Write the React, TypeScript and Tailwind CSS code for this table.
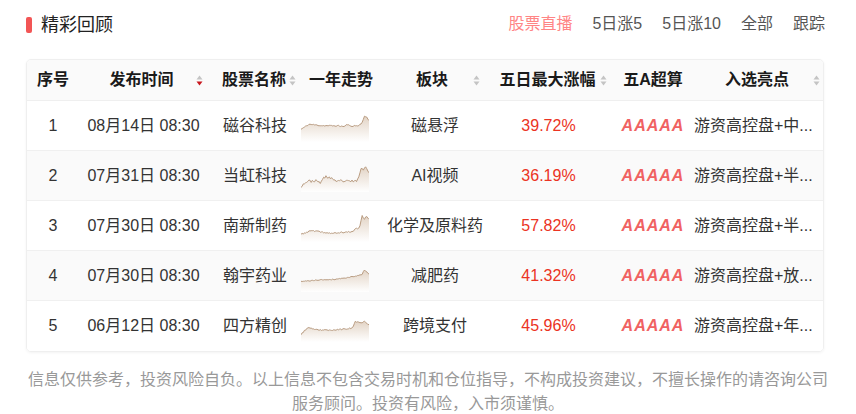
import React from 'react';

type Row = {
    no: number;
    time: string;
    name: string;
    sector: string;
    pct: string;
    note: string;
    keys: [number, number][];
    seed: number;
    noise: number;
};

const rows: Row[] = [
    {
        no: 1, time: '08月14日 08:30', name: '磁谷科技', sector: '磁悬浮', pct: '39.72%', note: '游资高控盘+中...', seed: 11, noise: 0.05,
        keys: [[0, 0.4], [0.12, 0.62], [0.3, 0.56], [0.55, 0.55], [0.64, 0.52], [0.68, 0.62], [0.72, 0.54], [0.85, 0.56], [0.9, 0.7], [0.93, 0.98], [0.97, 0.9], [1, 0.78]],
    },
    {
        no: 2, time: '07月31日 08:30', name: '当虹科技', sector: 'AI视频', pct: '36.19%', note: '游资高控盘+半...', seed: 23, noise: 0.12,
        keys: [[0, 0.1], [0.08, 0.3], [0.2, 0.34], [0.28, 0.26], [0.36, 0.52], [0.46, 0.44], [0.52, 0.26], [0.58, 0.34], [0.68, 0.3], [0.82, 0.34], [0.86, 0.5], [0.88, 0.94], [0.92, 0.78], [0.95, 0.96], [1, 0.74]],
    },
    {
        no: 3, time: '07月30日 08:30', name: '南新制药', sector: '化学及原料药', pct: '57.82%', note: '游资高控盘+半...', seed: 37, noise: 0.06,
        keys: [[0, 0.18], [0.15, 0.34], [0.3, 0.28], [0.45, 0.22], [0.6, 0.26], [0.75, 0.3], [0.8, 0.4], [0.86, 0.48], [0.88, 0.72], [0.9, 1], [0.93, 0.8], [0.96, 0.98], [1, 0.84]],
    },
    {
        no: 4, time: '07月30日 08:30', name: '翰宇药业', sector: '减肥药', pct: '41.32%', note: '游资高控盘+放...', seed: 41, noise: 0.04,
        keys: [[0, 0.3], [0.3, 0.38], [0.5, 0.4], [0.7, 0.48], [0.85, 0.58], [0.9, 0.62], [0.93, 0.8], [1, 0.64]],
    },
    {
        no: 5, time: '06月12日 08:30', name: '四方精创', sector: '跨境支付', pct: '45.96%', note: '游资高控盘+年...', seed: 53, noise: 0.05,
        keys: [[0, 0.18], [0.1, 0.48], [0.2, 0.38], [0.4, 0.36], [0.62, 0.4], [0.76, 0.46], [0.8, 0.74], [0.88, 0.66], [0.93, 0.74], [1, 0.6]],
    },
];

const mulberry32 = (a: number) => () => {
    a |= 0;
    a = (a + 0x6d2b79f5) | 0;
    let t = Math.imul(a ^ (a >>> 15), 1 | a);
    t = (t + Math.imul(t ^ (t >>> 7), 61 | t)) ^ t;
    return ((t ^ (t >>> 14)) >>> 0) / 4294967296;
};

const W = 68;
const H = 28;

const Sparkline = ({ row }: { row: Row }) => {
    const rand = mulberry32(row.seed);
    const n = 60;
    const pts: string[] = [];
    for (let i = 0; i <= n; i++) {
        const t = i / n;
        let k = 0;
        while (k < row.keys.length - 2 && row.keys[k + 1][0] < t) k++;
        const [x0, v0] = row.keys[k];
        const [x1, v1] = row.keys[k + 1];
        const f = x1 === x0 ? 0 : (t - x0) / (x1 - x0);
        const v = v0 + (v1 - v0) * f + (rand() - 0.5) * row.noise;
        const y = 1.5 + (1 - v) * 23;
        pts.push(`${(t * W).toFixed(2)},${y.toFixed(2)}`);
    }
    const line = 'M' + pts.join(' L');
    const area = `${line} L${W},${H} L0,${H} Z`;
    const id = `spark-${row.no}`;

    return (
        <svg width={W} height={H} viewBox={`0 0 ${W} ${H}`} className="mt-[4px]">
            <defs>
                <linearGradient id={id} x1="0" y1="0" x2="0" y2="1">
                    <stop offset="0%" stopColor="#e2d3c4" />
                    <stop offset="100%" stopColor="#ffffff" stopOpacity="0.9" />
                </linearGradient>
            </defs>
            <path d={area} fill={`url(#${id})`} />
            <path d={line} fill="none" stroke="#b89b80" strokeWidth="1" strokeLinejoin="round" />
        </svg>
    );
};

const SortIcon = ({ active = false }: { active?: boolean }) => (
    <svg width="7" height="11" viewBox="0 0 7 11" className="shrink-0">
        <path d="M3.5 0.5 L6.5 4.5 L0.5 4.5 Z" fill="#c4c4c4" />
        <path d="M0.5 6.5 L6.5 6.5 L3.5 10.5 Z" fill={active ? '#c8161d' : '#c4c4c4'} />
    </svg>
);

const tabs = ['股票直播', '5日涨5', '5日涨10', '全部', '跟踪'];

const cols = 'grid grid-cols-[52px_132px_88px_84px_104px_126px_80px_132px]';

const App = () => {
    return (
        <div className="w-[856px] h-[414px] bg-white font-['Liberation_Sans','Noto_Sans_CJK_SC',sans-serif] overflow-hidden">
            {/* title bar */}
            <div className="h-[50px] flex items-center justify-between pl-[26px] pr-[31px]">
                <div className="flex items-center">
                    <span className="w-[6px] h-[16px] rounded-[2px] bg-[#f25555]" />
                    <span className="ml-[9px] text-[18px] text-[#222] leading-none">精彩回顾</span>
                </div>
                <div className="flex items-center gap-[20px] text-[16px] -mt-[3px]">
                    {tabs.map((t, i) => (
                        <span key={t} className={i === 0 ? 'text-[#ff8585]' : 'text-[#555]'}>
                            {t}
                        </span>
                    ))}
                </div>
            </div>

            {/* table */}
            <div className="ml-[26px] mt-[9px] w-[798px] rounded-[5px] border border-[#efefef] shadow-[0_1px_3px_rgba(0,0,0,0.05)] overflow-hidden">
                <div className={`${cols} h-[41px] bg-[#fafafa] border-b border-[#efefef] text-[16px] font-bold text-[#1a1a1a]`}>
                    <div className="flex items-center justify-center">序号</div>
                    <div className="flex items-center pl-[8px] pr-[8px]">
                        <span className="flex-1 text-center">发布时间</span>
                        <SortIcon active />
                    </div>
                    <div className="flex items-center pl-[8px] pr-[3px]">
                        <span className="flex-1 text-center whitespace-nowrap">股票名称</span>
                        <SortIcon />
                    </div>
                    <div className="flex items-center justify-center">一年走势</div>
                    <div className="flex items-center pl-[8px] pr-[7px]">
                        <span className="flex-1 text-center">板块</span>
                        <SortIcon />
                    </div>
                    <div className="flex items-center pl-[8px] pr-[6px]">
                        <span className="flex-1 text-center whitespace-nowrap">五日最大涨幅</span>
                        <SortIcon />
                    </div>
                    <div className="flex items-center justify-center">五A超算</div>
                    <div className="flex items-center pl-[8px] pr-[5px]">
                        <span className="flex-1 text-center">入选亮点</span>
                        <SortIcon />
                    </div>
                </div>

                {rows.map((r, i) => (
                    <div
                        key={r.no}
                        className={`${cols} h-[50px] text-[16px] text-[#333] ${i < rows.length - 1 ? 'border-b border-[#f0f0f0]' : ''} ${i % 2 === 1 ? 'bg-[#fafafa]' : 'bg-white'}`}
                    >
                        <div className="flex items-center justify-center">{r.no}</div>
                        <div className="flex items-center justify-center whitespace-nowrap pr-[3px]">{r.time}</div>
                        <div className="flex items-center justify-center">{r.name}</div>
                        <div className="flex items-center pl-[2px]">
                            <Sparkline row={r} />
                        </div>
                        <div className="flex items-center justify-center whitespace-nowrap">{r.sector}</div>
                        <div className="flex items-center justify-center text-[#eb3323] pr-[3px]">{r.pct}</div>
                        <div className="flex items-center justify-center">
                            <span className="font-bold italic tracking-[1px] text-[#f06262]">AAAAA</span>
                        </div>
                        <div className="flex items-center pl-[1px] whitespace-nowrap overflow-hidden">{r.note}</div>
                    </div>
                ))}
            </div>

            {/* disclaimer */}
            <p className="mt-[14px] px-[20px] text-center text-[16px] leading-[24px] text-[#999] font-['Noto_Sans_CJK_SC',sans-serif]">
                信息仅供参考，投资风险自负。以上信息不包含交易时机和仓位指导，不构成投资建议，不擅长操作的请咨询公司
                <br />
                服务顾问。投资有风险，入市须谨慎。
            </p>
        </div>
    );
};

export default App;
